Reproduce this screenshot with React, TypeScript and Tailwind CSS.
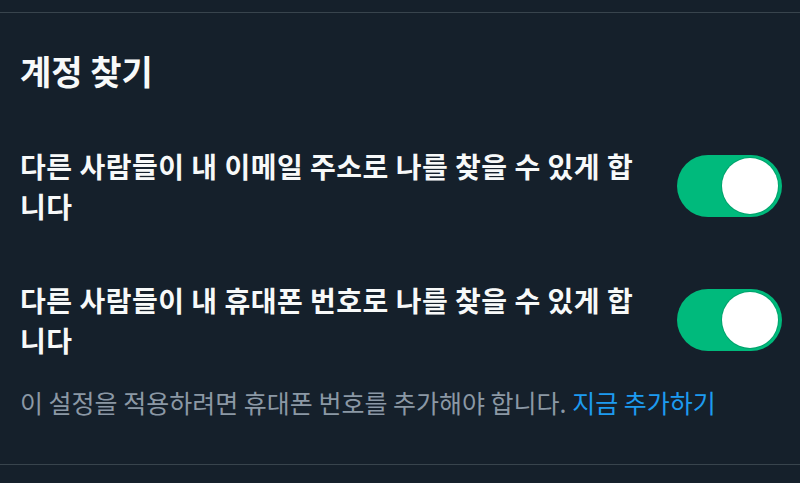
import React, { useState } from "react";

type ToggleProps = {
  on: boolean;
  onChange: () => void;
};

const Toggle: React.FC<ToggleProps> = ({ on, onChange }) => {
  return (
    <button
      type="button"
      onClick={onChange}
      className={`relative flex items-center shrink-0 w-[105px] h-[62px] rounded-full px-[4px] ${
        on ? "bg-[#00ba7c] justify-end" : "bg-[#3e4a54] justify-start"
      }`}
    >
      <span className="block w-[56px] h-[56px] rounded-full bg-white shadow-[0_0_0_1px_rgba(0,120,80,0.35)]" />
    </button>
  );
};

type RowProps = {
  text: string;
  on: boolean;
  onChange: () => void;
};

const SettingRow: React.FC<RowProps> = ({ text, on, onChange }) => {
  return (
    <div className="flex items-center justify-between h-[134px] pl-[20px] pr-[18px]">
      <p className="w-[630px] text-[28px] leading-[40px] tracking-[0.5px] font-bold text-[#f7f9f9]">
        {text}
      </p>
      <Toggle on={on} onChange={onChange} />
    </div>
  );
};

const App = (): JSX.Element => {
  const [email, setEmail] = useState(true);
  const [phone, setPhone] = useState(true);
  return (
    <div
      className="w-[800px] h-[483px] bg-[#15202b] overflow-hidden"
      style={{ fontFamily: '"Noto Sans CJK KR", "Noto Sans", sans-serif' }}
    >
      <div className="h-[13px] border-b border-[#38444d]" />
      <div className="h-[106px] pl-[20px] pt-[38px]">
        <h1 className="text-[34px] leading-[40px] font-bold text-[#f7f9f9]">
          계정 찾기
        </h1>
      </div>
      <SettingRow
        text="다른 사람들이 내 이메일 주소로 나를 찾을 수 있게 합니다"
        on={email}
        onChange={() => setEmail(!email)}
      />
      <SettingRow
        text="다른 사람들이 내 휴대폰 번호로 나를 찾을 수 있게 합니다"
        on={phone}
        onChange={() => setPhone(!phone)}
      />
      <div className="h-[78px] pl-[20px] border-b border-[#38444d]">
        <p className="text-[25px] leading-[30px] text-[#8b98a5]">
          이 설정을 적용하려면 휴대폰 번호를 추가해야 합니다.{" "}
          <a href="#" className="text-[#1d9bf0]">
            지금 추가하기
          </a>
        </p>
      </div>
    </div>
  );
};

export default App;
